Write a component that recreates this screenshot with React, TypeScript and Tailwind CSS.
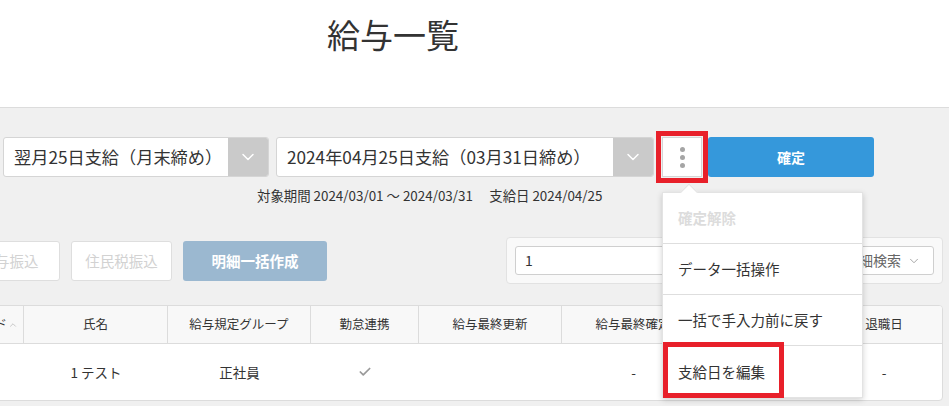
import { Check, ChevronDown, ChevronUp } from "lucide-react";

const FONT = "font-['Noto_Sans_CJK_JP','Noto_Sans',sans-serif]";

/* ── select box with grey arrow block ── */
function PaySelect({ label, className }: { label: string; className: string }) {
  return (
    <div className={`flex h-[40px] overflow-hidden rounded-[3px] border border-[#d5d5d5] bg-white ${className}`}>
      <div className="flex flex-1 items-center pl-[10px] text-[17.2px] text-[#333] whitespace-nowrap">{label}</div>
      <div className="flex w-[40px] items-center justify-center bg-[#cacaca]">
        <ChevronDown size={20} strokeWidth={1.8} color="#ffffff" />
      </div>
    </div>
  );
}

const MENU_ITEMS = [
  { label: "確定解除", disabled: true },
  { label: "データ一括操作" },
  { label: "一括で手入力前に戻す" },
  { label: "支給日を編集", marked: true },
];

function ActionMenu() {
  return (
    <div className="absolute left-0 top-[55px] z-10 w-[201px] border border-[#e3e3e3] bg-white shadow-[0_2px_6px_rgba(0,0,0,0.18)]">
      {/* arrow */}
      <span className="absolute left-[20px] top-[-7px] h-[12px] w-[12px] rotate-45 border-l border-t border-[#e3e3e3] bg-white" />
      {MENU_ITEMS.map((item, i) => (
        <div
          key={item.label}
          className={`relative flex h-[51px] items-center px-[15px] text-[14.5px] ${
            i < MENU_ITEMS.length - 1 ? "border-b border-[#dedede]" : ""
          } ${item.disabled ? "font-bold text-[#dcdcdc]" : "text-[#333]"}`}
        >
          {item.label}
          {item.marked && (
            <span className="pointer-events-none absolute left-0 top-[-4px] h-[56px] w-[121px] border-[5px] border-[#e8202a]" />
          )}
        </div>
      ))}
    </div>
  );
}

const COLUMNS = [
  { label: "社員コード", w: "w-[100px] justify-end pr-[5px]", sort: true },
  { label: "氏名", w: "w-[144px] justify-center" },
  { label: "給与規定グループ", w: "w-[143px] justify-center" },
  { label: "勤怠連携", w: "w-[108px] justify-center" },
  { label: "給与最終更新", w: "w-[143px] justify-center" },
  { label: "給与最終確定", w: "w-[143px] justify-center" },
  { label: "入社日", w: "w-[121px] justify-center" },
  { label: "退職日", w: "flex-1 justify-center" },
];

const ROW = ["", "1 テスト", "正社員", "check", "", "-", "", "-"];

export default function App() {
  return (
    <div className={`relative h-[406px] w-[949px] overflow-hidden bg-[#f0f0f0] ${FONT}`}>
      {/* header */}
      <div className="h-[108px] border-b border-[#dcdcdc] bg-white pl-[327px] pt-[14px]">
        <h1 className="text-[33px] leading-[40px] text-[#333]">給与一覧</h1>
      </div>

      {/* period selectors */}
      <div className="mt-[29px] flex items-center pl-[3px]">
        <PaySelect label="翌月25日支給（月末締め）" className="w-[266px]" />
        <PaySelect label="2024年04月25日支給（03月31日締め）" className="ml-[7px] w-[378px]" />
        <div className="relative ml-[8px]">
          <button className="flex h-[40px] w-[40px] flex-col items-center justify-center gap-[3px] border border-[#d5d5d5] bg-white outline-[5px] outline-offset-[1px] outline-[#e8202a] outline-solid">
            <span className="h-[5px] w-[5px] rounded-full bg-[#a5a5a5]" />
            <span className="h-[5px] w-[5px] rounded-full bg-[#a5a5a5]" />
            <span className="h-[5px] w-[5px] rounded-full bg-[#a5a5a5]" />
          </button>
          <ActionMenu />
        </div>
        <button className="ml-[6px] h-[40px] w-[166px] rounded-[3px] bg-[#3598db] text-[14px] font-bold text-white">確定</button>
      </div>

      <p className="mt-[8px] pl-[257px] text-[13.4px] leading-[20px] text-[#333] whitespace-pre">
        対象期間 2024/03/01 〜 2024/03/31　 支給日 2024/04/25
      </p>

      {/* actions + search */}
      <div className="mt-[32px] flex items-center pr-[6px]">
        <div className="ml-[-41px] flex items-center gap-[11px]">
          <button className="h-[40px] w-[101px] rounded-[3px] border border-[#dedede] bg-white text-[14.5px] text-[#d2d2d2]">給与振込</button>
          <button className="h-[40px] w-[101px] rounded-[3px] border border-[#dedede] bg-white text-[14.5px] text-[#d2d2d2]">住民税振込</button>
          <button className="h-[40px] w-[144px] rounded-[3px] bg-[#9bb8d0] text-[14.5px] font-bold text-white">明細一括作成</button>
        </div>
        <div className="ml-auto flex h-[47px] w-[437px] items-center gap-[8px] rounded-[4px] border border-[#e2e2e2] bg-[#f9f9f9] px-[8px]">
          <div className="flex h-[29px] flex-1 items-center rounded-[3px] border border-[#cfcfcf] bg-white pl-[9px] text-[14px] text-[#333]">1</div>
          <button className="flex h-[29px] w-[96px] items-center justify-end gap-[6px] rounded-[3px] border border-[#cfcfcf] bg-white pr-[12px] text-[14px] text-[#666]">
            詳細検索
            <ChevronDown size={14} strokeWidth={1.5} color="#999" />
          </button>
        </div>
      </div>

      {/* table */}
      <div className="ml-[-77px] mr-[6px] mt-[21px] overflow-hidden rounded-[4px] border border-[#dcdcdc] bg-white">
        <div className="flex h-[38px] border-b border-[#dcdcdc] bg-[#f8f8f8]">
          {COLUMNS.map((c, i) => (
            <div
              key={c.label}
              className={`flex items-center gap-[1px] text-[12.5px] text-[#333] ${c.w} ${
                i < COLUMNS.length - 1 ? "border-r border-[#dcdcdc]" : ""
              }`}
            >
              {c.label}
              {c.sort && <ChevronUp size={10} strokeWidth={1.5} color="#aaa" />}
            </div>
          ))}
        </div>
        <div className="flex h-[56px]">
          {COLUMNS.map((c, i) => (
            <div key={c.label} className={`flex items-center text-[13.5px] text-[#333] ${c.w}`}>
              {ROW[i] === "check" ? <Check size={14} strokeWidth={3} color="#9a9a9a" /> : ROW[i]}
            </div>
          ))}
        </div>
      </div>
    </div>
  );
}
